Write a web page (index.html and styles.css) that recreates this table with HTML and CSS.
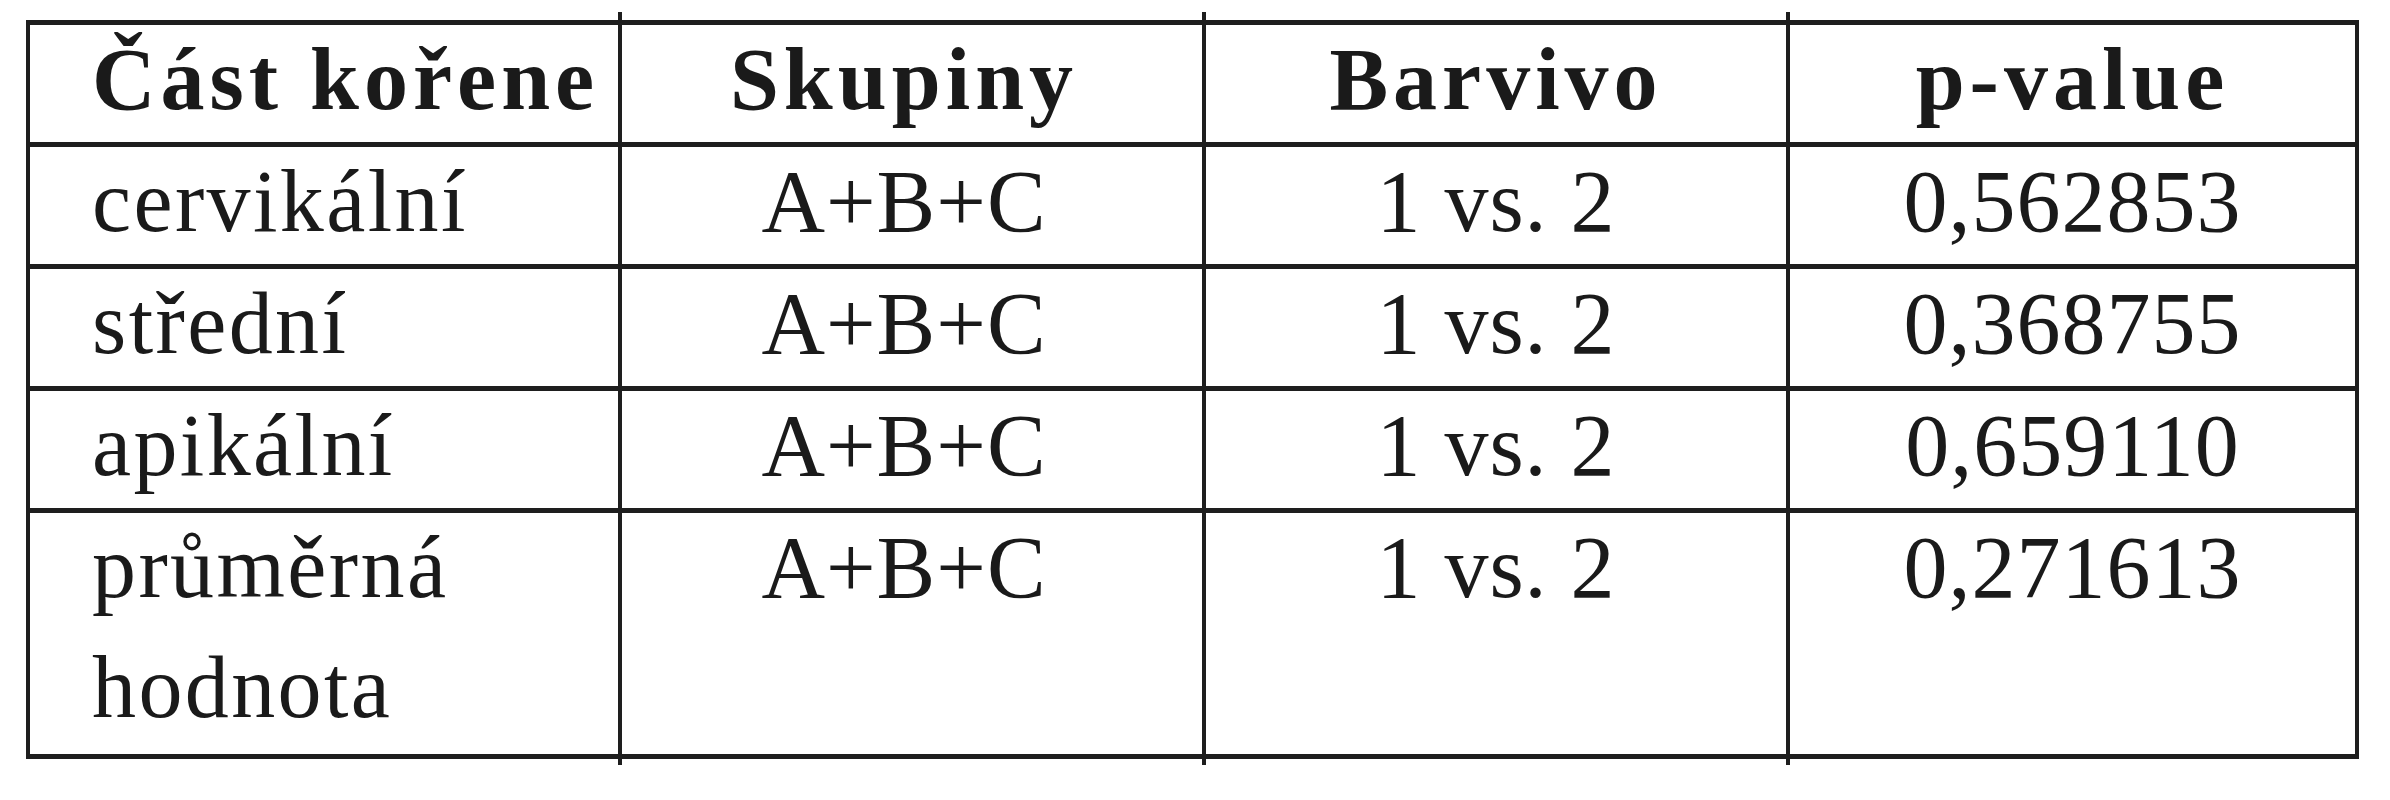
FILE: index.html
```html
<!DOCTYPE html>
<html lang="cs">
<head>
<meta charset="utf-8">
<title>Tabulka</title>
<link rel="stylesheet" href="styles.css">
</head>
<body>
<div class="tbl">
  <div class="cell head c1 top"><span>Část kořene</span></div>
  <div class="cell head c2 top"><span>Skupiny</span></div>
  <div class="cell head c3 top"><span>Barvivo</span></div>
  <div class="cell head c4"><span>p-value</span></div>

  <div class="cell c1"><span>cervikální</span></div>
  <div class="cell c2"><span>A+B+C</span></div>
  <div class="cell c3"><span>1 vs. 2</span></div>
  <div class="cell c4"><span>0,562853</span></div>

  <div class="cell c1"><span>střední</span></div>
  <div class="cell c2"><span>A+B+C</span></div>
  <div class="cell c3"><span>1 vs. 2</span></div>
  <div class="cell c4"><span>0,368755</span></div>

  <div class="cell c1"><span>apikální</span></div>
  <div class="cell c2"><span>A+B+C</span></div>
  <div class="cell c3"><span>1 vs. 2</span></div>
  <div class="cell c4"><span>0,659110</span></div>

  <div class="cell c1 bottom"><span>průměrná<br>hodnota</span></div>
  <div class="cell c2 bottom"><span>A+B+C</span></div>
  <div class="cell c3 bottom"><span>1 vs. 2</span></div>
  <div class="cell c4"><span>0,271613</span></div>
</div>
</body>
</html>
```

FILE: styles.css
```css
html, body {
  margin: 0;
  padding: 0;
  background: #ffffff;
}

body {
  width: 2390px;
  height: 800px;
  overflow: hidden;
  font-family: "Liberation Serif", "Times New Roman", serif;
  color: #1a1a1a;
}

.tbl {
  display: grid;
  grid-template-columns: 592px 584px 584px 569px;
  grid-template-rows: 122px 122px 122px 122px 246px;
  width: max-content;
  margin: 20px 0 0 26px;
  border-top: 5px solid #1e1e1e;
  border-left: 4px solid #1e1e1e;
}

.cell {
  position: relative;
  box-sizing: border-box;
  border-right: 4px solid #1e1e1e;
  border-bottom: 5px solid #1e1e1e;
  font-size: 88px;
  line-height: 120px;
  letter-spacing: 1px;
  text-align: center;
}

.cell span {
  display: block;
  margin-top: -5px;
}

.c1 {
  text-align: left;
  padding-left: 62px;
  letter-spacing: 2.4px;
}

.c2 {
  padding-right: 16px;
}

.c4 {
  border-right-width: 4px;
}

.head {
  font-weight: bold;
  letter-spacing: 5px;
}

.head.c1 {
  letter-spacing: 5px;
}

.top::after,
.bottom::after {
  content: "";
  position: absolute;
  right: -4px;
  width: 4px;
  height: 8px;
  background: #1e1e1e;
}

.top::after {
  top: -13px;
}

.bottom::after {
  bottom: -11px;
}
```
